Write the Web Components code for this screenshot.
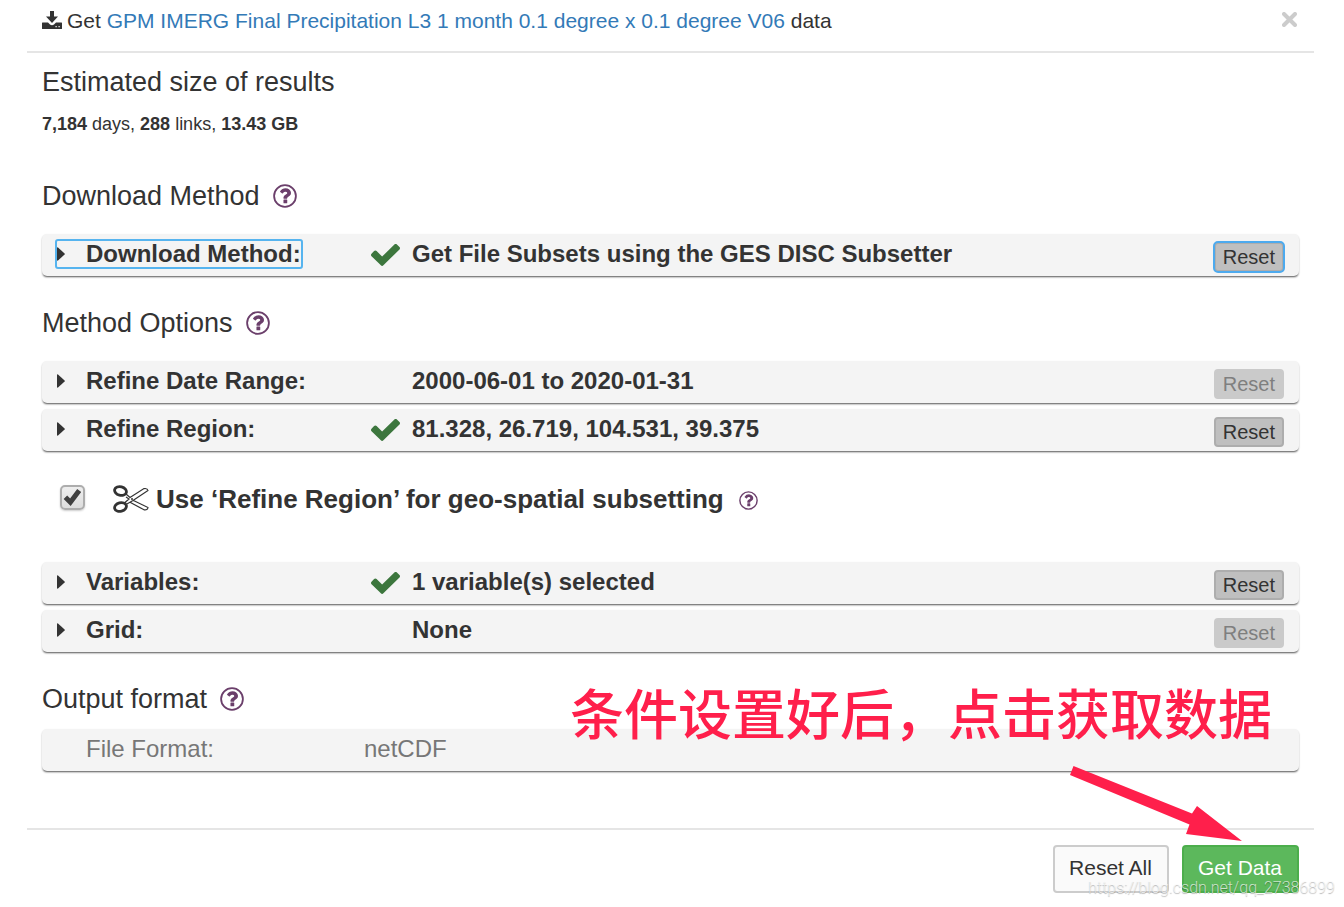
<!DOCTYPE html>
<html lang="en">
<head>
<meta charset="utf-8">
<title>Get Data</title>
<style>
  body { margin: 0; background: #fff; color: #333; font-family: "Liberation Sans", Arial, sans-serif; }
</style>
</head>
<body>
<download-dialog></download-dialog>

<script>
const define = (name, html, setup) => {
  const template = document.createElement('template');
  template.innerHTML = html;
  customElements.define(name, class extends HTMLElement {
    constructor() {
      super();
      this.attachShadow({ mode: 'open' }).append(template.content.cloneNode(true));
    }
    connectedCallback() {
      if (setup) setup(this, this.shadowRoot);
    }
  });
};

define('help-icon', `
  <style>
    :host { display: inline-flex; width: 24px; height: 24px; color: #6b3f6b; }
    :host([small]) { width: 19px; height: 19px; }
    button { display: flex; width: 100%; padding: 0; border: 0; background: none; color: inherit; }
    svg { width: 100%; height: 100%; }
  </style>
  <button type="button" aria-label="Help">
    <svg viewBox="0 0 24 24" aria-hidden="true">
      <circle cx="12" cy="12" r="10.9" fill="none" stroke="currentColor" stroke-width="1.8"/>
      <g transform="translate(1.4 1.2) scale(.0118)" fill="currentColor">
        <path d="M1088 1256v240q0 16-12 28t-28 12h-240q-16 0-28-12t-12-28v-240q0-16 12-28t28-12h240q16 0 28 12t12 28zm316-600q0 54-15.5 101t-35 76.5-55 59.5-57.5 43.5-61 35.5q-41 23-68.5 65t-27.5 67q0 17-12 32.5t-28 15.5h-240q-15 0-25.5-18.5t-10.5-37.5v-45q0-83 65-156.5t143-108.5q59-27 84-56t25-76q0-42-46.5-74t-107.5-32q-65 0-108 29-35 25-107 115-13 16-31 16-12 0-25-8l-164-125q-13-10-15.5-25t5.5-28q160-266 464-266 80 0 161 31t146 83 106 127.5 41 158.5z"/>
      </g>
    </svg>
  </button>`);

define('section-heading', `
  <style>
    :host { display: flex; align-items: center; gap: 13px; }
    h2 { margin: 0; font-size: 27px; line-height: 30px; font-weight: 400; }
  </style>
  <h2><slot></slot></h2><slot name="help"></slot>`);

define('option-row', `
  <style>
    :host { display: flex; align-items: flex-start; box-sizing: border-box; height: 42px; padding: 0 15px 0 14px;
      background: #f4f4f4; border-radius: 5px; box-shadow: 0 2px 2px -1px rgba(0,0,0,.55), 0 1px 2px rgba(0,0,0,.2); font-size: 24px; line-height: 28px; font-weight: 700; }
    button { font-family: inherit; color: inherit; margin: 0; }
    .name { display: flex; flex: 0 0 315px; padding-top: 6px; }
    .toggle { display: flex; align-items: center; gap: 21px; padding: 0 1px; border: 0; border-radius: 2px; background: none;
      font-size: 24px; line-height: 28px; font-weight: 700; white-space: nowrap; }
    .caret { width: 8px; height: 14px; fill: #333; }
    .state { flex: 0 0 41px; height: 42px; display: flex; align-items: center; }
    .check { display: none; width: 29px; height: 22px; fill: #3c763d; }
    :host([checked]) .check { display: block; }
    .value { flex: 1; padding-top: 6px; }
    .reset { box-sizing: border-box; height: 30px; margin-top: 8px; padding: 0 7px 1px; border: 2px solid #adadad; border-radius: 4px;
      background: #bfbfbf; font-size: 20px; line-height: 24px; }
    .reset:disabled { color: #7f7f7f; background: #cacaca; border-color: #cacaca; }
    :host([active]) .toggle { outline: 2px solid #56b4ef; outline-offset: -1px; }
    :host([active]) .reset { outline: 2px solid #4daaee; outline-offset: -1px; }
    :host([plain]) { font-weight: 400; color: #777; }
    :host([plain]) .toggle { font-weight: 400; }
    :host([plain]) .caret { visibility: hidden; }
    :host([plain]) .name { flex-basis: 308px; }
    :host([plain]) .state, :host([plain]) .reset { display: none; }
  </style>
  <div class="name"><button class="toggle" type="button"><svg class="caret" viewBox="0 0 8 14" aria-hidden="true"><path d="M0 1Q0 0 1 .5L7.6 6.5Q8 7 7.6 7.5L1 13.5Q0 14 0 13Z"/></svg><slot name="label"></slot></button></div>
  <div class="state"><svg class="check" viewBox="121 340 1550 1188" preserveAspectRatio="none" aria-hidden="true"><path d="M1671 566q0 40-28 68l-724 724-136 136q-28 28-68 28t-68-28l-136-136-362-362q-28-28-28-68t28-68l136-136q28-28 68-28t68 28l294 295 656-657q28-28 68-28t68 28l136 136q28 28 28 68z"/></svg></div>
  <div class="value"><slot></slot></div>
  <button class="reset" type="button">Reset</button>`,
  (host, root) => { root.querySelector('.reset').disabled = host.hasAttribute('locked'); });

define('subset-option', `
  <style>
    :host { display: flex; align-items: center; height: 30px; padding-left: 18px; font-size: 26px; line-height: 30px; font-weight: 700; }
    input { appearance: none; box-sizing: border-box; width: 25px; height: 25px; margin: 0 28px 4px 0; border: 2px solid #adadad; border-radius: 5px;
      background: url("data:image/svg+xml,%3Csvg xmlns='http://www.w3.org/2000/svg' viewBox='0 0 21 21'%3E%3Cpath d='M3.400 10.200L8.400 15.200L17.200 3.600' fill='none' stroke='%23404040' stroke-width='5'/%3E%3C/svg%3E") center / 100%, linear-gradient(#eee, #ddd);
      box-shadow: 0 1px 2px rgba(0,0,0,.2); }
    input:not(:checked) { background: linear-gradient(#eee, #ddd); }
    label { display: flex; align-items: center; gap: 7px; }
    .scissors { width: 36px; height: 28px; fill: none; stroke: #333; }
    slot[name=help]::slotted(*) { margin: 2px 0 0 15px; }
  </style>
  <input id="subset" type="checkbox" checked>
  <label for="subset"><svg class="scissors" viewBox="0 0 36 28" aria-hidden="true">
    <g stroke-width="2.8"><ellipse cx="7.500" cy="6" rx="6" ry="4.300" transform="rotate(15 7.500 6)"/><ellipse cx="7.500" cy="22" rx="6" ry="4.300" transform="rotate(-15 7.500 22)"/></g>
    <path d="M13 9L17 12.500L31 3.600Q34.500 3 35 5.500L20 15.500L13 19.500M13 19.500L12.500 17L16 14L13 12M20.500 15.500L35 22.500Q34.500 25.500 31 24.800L17 17.200" fill="#fff" stroke-width="1.200"/><circle cx="19" cy="14" r="1" fill="#333" stroke="none"/></svg><slot></slot></label>
  <slot name="help"></slot>`);

define('dialog-button', `
  <style>
    :host { display: block; }
    button { box-sizing: border-box; height: 48px; padding: 0 15px 2px 14px; border: 2px solid #ccc; border-radius: 4px; background: #fafafa; color: #333;
      font: 21px/24px "Liberation Sans", Arial, sans-serif; white-space: nowrap; }
    :host([primary]) button { background: #5cb85c; border-color: #4cae4c; color: #fff; }
  </style>
  <button type="button"><slot></slot></button>`);

define('image-note', `
  <style>
    :host { position: absolute; top: 672px; right: 72px; color: #ff1f4b; pointer-events: none; }
    p { margin: 0; font: 500 54px/80px "Noto Sans CJK SC", sans-serif; white-space: nowrap; }
    svg { position: absolute; top: 94px; right: 28px; width: 174px; height: 76px; fill: currentColor; }
  </style>
  <p lang="zh-CN"><slot></slot></p>
  <svg viewBox="0 0 174 76" aria-hidden="true"><path d="M3.500 0L122 47.500L127 40L172 75L116 68L119.500 58.500L0 9Z"/></svg>`);

define('page-watermark', `
  <style>
    :host { position: absolute; right: 9px; top: 878px; color: rgba(255,255,255,.7); font: 300 16px/20px Roboto, sans-serif;
      text-shadow: 0 1px 1px rgba(0,0,0,.3); pointer-events: none; }
  </style>
  <slot></slot>`);

define('download-dialog', `
  <style>
    :host { display: block; position: relative; margin: 0 30px 0 27px; padding-bottom: 14px; }
    header { display: flex; align-items: center; justify-content: space-between; box-sizing: border-box; height: 53px; padding: 0 15px 10px;
      border-bottom: 2px solid #e5e5e5; font-size: 21px; line-height: 24px; }
    h1 { display: flex; align-items: center; gap: 5px; margin: 0; font-size: inherit; font-weight: 400; }
    h1 svg { width: 20px; height: 20px; margin-bottom: 2px; fill: #333; }
    a { color: #337ab7; text-decoration: none; }
    .close { display: flex; padding: 0 2px 3px 0; border: 0; background: none; }
    .close svg { width: 15px; height: 15px; stroke: #ccc; stroke-width: 4; stroke-linecap: round; }
    main { padding: 14px 15px 0; }
    .stats { margin: 15px 0 45px; font-size: 18px; line-height: 24px; }
    .rows { display: grid; gap: 6px; margin: 23px 0 32px; }
    subset-option { margin: 33px 0 48px; }
    .output { margin: 15px 0 57px; }
    footer { display: flex; justify-content: flex-end; gap: 13px; padding: 15px 15px 0; border-top: 2px solid #e5e5e5; }
  </style>
  <header>
    <h1><svg viewBox="0 0 20 20" aria-hidden="true"><path d="M8 1H12V6.500H16L10 13L4 6.500H8ZM0 13Q0 12.500.5 12.500H6L8 14.500Q10 16 12 14.500L14 12.500H19.500Q20 12.500 20 13V18.500Q20 19 19.500 19H.5Q0 19 0 18.500ZM13.500 16V17.200H14.700V16ZM16.500 16V17.200H17.700V16Z" fill-rule="evenodd"/></svg>
      <span>Get <a href="#dataset">GPM IMERG Final Precipitation L3 1 month 0.1 degree x 0.1 degree V06</a> data</span></h1>
    <button class="close" type="button" aria-label="Close"><svg viewBox="0 0 15 15"><path d="M2 2L13 13M13 2L2 13"/></svg></button>
  </header>
  <main>
    <section-heading>Estimated size of results</section-heading>
    <p class="stats"><b>7,184</b> days, <b>288</b> links, <b>13.43 GB</b></p>
    <section-heading>Download Method<help-icon slot="help"></help-icon></section-heading>
    <div class="rows">
      <option-row checked active><span slot="label">Download Method:</span>Get File Subsets using the GES DISC Subsetter</option-row>
    </div>
    <section-heading>Method Options<help-icon slot="help"></help-icon></section-heading>
    <div class="rows">
      <option-row locked><span slot="label">Refine Date Range:</span>2000-06-01 to 2020-01-31</option-row>
      <option-row checked><span slot="label">Refine Region:</span>81.328, 26.719, 104.531, 39.375</option-row>
    </div>
    <subset-option>Use ‘Refine Region’ for geo-spatial subsetting<help-icon small slot="help"></help-icon></subset-option>
    <div class="rows">
      <option-row checked><span slot="label">Variables:</span>1 variable(s) selected</option-row>
      <option-row locked><span slot="label">Grid:</span>None</option-row>
    </div>
    <section-heading>Output format<help-icon slot="help"></help-icon></section-heading>
    <option-row class="output" plain><span slot="label">File Format:</span>netCDF</option-row>
  </main>
  <footer>
    <dialog-button>Reset All</dialog-button>
    <dialog-button primary>Get Data</dialog-button>
  </footer>`);
</script>
<image-note>条件设置好后，点击获取数据</image-note>
<page-watermark>https://blog.csdn.net/qq_27386899</page-watermark>
</body>
</html>
